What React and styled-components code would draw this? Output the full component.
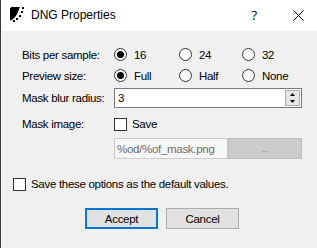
import React from 'react';
import styled, { createGlobalStyle } from 'styled-components';

const GlobalStyle = createGlobalStyle`
    html, body {
        margin: 0;
        padding: 0;
        background: #f0f0f0;
    }
    body {
        font-family: "Liberation Sans", Arial, sans-serif;
        font-size: 11.5px;
        letter-spacing: -0.3px;
        color: #000;
    }
`;

const AppIcon = () => (
    <svg width="16" height="15" viewBox="0 0 16 15">
        <path d="M0 1 L10 0 Q8 6 3 11 L0 14 Z" fill="#000" />
        <path d="M1 0 H9 Q9 7 2 13 L0 13 Z" fill="#000" />
        <rect x="12" y="0" width="2" height="2" fill="#000" />
        <rect x="11" y="4" width="2" height="2" fill="#000" />
        <rect x="9" y="8" width="2" height="2" fill="#000" />
        <rect x="6" y="11" width="2" height="2" fill="#000" />
        <rect x="3" y="13" width="2" height="2" fill="#000" />
    </svg>
);

const CloseIcon = () => (
    <svg width="11" height="11" viewBox="0 0 11 11">
        <path d="M0.5 0.5 L10.5 10.5 M10.5 0.5 L0.5 10.5" stroke="#000" strokeWidth="1" />
    </svg>
);

const SpinArrows = () => (
    <svg width="7" height="14" viewBox="0 0 7 14">
        <path d="M3.5 2 L6 5 L1 5 Z" fill="#000" />
        <path d="M1 9 L6 9 L3.5 12 Z" fill="#000" />
    </svg>
);

const Radio = ({ checked, label }) => (
    <Option>
        <RadioCircle $checked={checked} />
        <span>{label}</span>
    </Option>
);

const Check = ({ label }) => (
    <Option $gap={5}>
        <CheckBox />
        <span>{label}</span>
    </Option>
);

const App = () => {
    return (
        <Window>
            <GlobalStyle />
            <TitleBar>
                <AppIcon />
                <Title>DNG Properties</Title>
                <Help>?</Help>
                <CloseIcon />
            </TitleBar>
            <Body>
                <Form>
                    <Label>Bits per sample:</Label>
                    <Radio checked label="16" />
                    <Radio label="24" />
                    <Radio label="32" />

                    <Label>Preview size:</Label>
                    <Radio checked label="Full" />
                    <Radio label="Half" />
                    <Radio label="None" />

                    <Label>Mask blur radius:</Label>
                    <SpinBox>
                        <SpinValue>3</SpinValue>
                        <SpinButtons>
                            <SpinArrows />
                        </SpinButtons>
                    </SpinBox>

                    <Label>Mask image:</Label>
                    <Wide>
                        <Check label="Save" />
                    </Wide>

                    <span />
                    <PathRow>
                        <PathField>%od/%of_mask.png</PathField>
                        <BrowseButton>...</BrowseButton>
                    </PathRow>
                </Form>
                <DefaultRow>
                    <Check label="Save these options as the default values." />
                </DefaultRow>
                <Buttons>
                    <Button $default>Accept</Button>
                    <Button>Cancel</Button>
                </Buttons>
            </Body>
        </Window>
    );
};

const Window = styled.div`
    width: 317px;
    height: 248px;
    box-sizing: border-box;
    border-left: 1px solid #3c3c3c;
    background: #f0f0f0;
    overflow: hidden;
`;

const TitleBar = styled.div`
    height: 31px;
    background: #fff;
    display: flex;
    align-items: center;
    padding: 0 13px 0 9px;
    box-sizing: border-box;
    letter-spacing: 0;
    svg:first-child {
        margin-top: -3px;
    }
`;

const Title = styled.div`
    font-family: "Liberation Sans", Arial, sans-serif;
    font-size: 12px;
    margin-left: 5px;
    flex: 1;
    margin-top: -2px;
`;

const Help = styled.div`
    font-family: "Open Sans", "Noto Sans", sans-serif;
    font-size: 13px;
    margin-right: 36px;
    margin-top: -2px;
`;

const Body = styled.div`
    padding: 13px 0 0 21px;
`;

const Form = styled.div`
    display: grid;
    grid-template-columns: 92px 65px 63px 60px;
    grid-template-rows: 21px 21px 24px 28px 21px;
    align-items: center;
`;

const Label = styled.div`
    white-space: nowrap;
`;

const Option = styled.label`
    display: flex;
    align-items: center;
    gap: ${p => p.$gap ?? 7}px;
    white-space: nowrap;
`;

const RadioCircle = styled.span`
    width: 13px;
    height: 13px;
    box-sizing: border-box;
    border-radius: 50%;
    border: 1px solid #333;
    background: #fff;
    display: flex;
    align-items: center;
    justify-content: center;
    &::after {
        content: "";
        display: ${p => (p.$checked ? 'block' : 'none')};
        width: 7px;
        height: 7px;
        border-radius: 50%;
        background: #000;
    }
`;

const CheckBox = styled.span`
    width: 13px;
    height: 13px;
    box-sizing: border-box;
    border: 1px solid #333;
    background: #fff;
`;

const SpinBox = styled.div`
    grid-column: 2 / 5;
    width: 188px;
    height: 20px;
    box-sizing: border-box;
    border: 1px solid #7a7a7a;
    background: #fff;
    display: flex;
    align-items: stretch;
`;

const SpinValue = styled.div`
    flex: 1;
    padding-left: 3px;
    display: flex;
    align-items: center;
`;

const SpinButtons = styled.div`
    width: 15px;
    margin: 1px;
    border: 1px solid #adadad;
    background: #e6e6e6;
    display: flex;
    align-items: center;
    justify-content: center;
    box-sizing: border-box;
`;

const Wide = styled.div`
    grid-column: 2 / 5;
`;

const PathRow = styled.div`
    grid-column: 2 / 5;
    display: flex;
    height: 21px;
`;

const PathField = styled.div`
    width: 114px;
    box-sizing: border-box;
    border: 1px solid #cccccc;
    background: #f7f7f7;
    color: #6d6d6d;
    padding-left: 2px;
    display: flex;
    align-items: center;
`;

const BrowseButton = styled.div`
    width: 74px;
    box-sizing: border-box;
    border: 1px solid #bfbfbf;
    background: #cccccc;
    color: #8a8a8a;
    font-size: 9px;
    display: flex;
    align-items: flex-end;
    justify-content: center;
    padding-bottom: 4px;
`;

const DefaultRow = styled.div`
    margin: 15px 0 0 -9px;
    height: 20px;
    display: flex;
    align-items: center;
`;

const Buttons = styled.div`
    display: flex;
    gap: 8px;
    margin-top: 14px;
    padding-left: 63px;
`;

const Button = styled.div`
    width: 73px;
    height: 21px;
    box-sizing: border-box;
    background: #e1e1e1;
    border: ${p => (p.$default ? '2px solid #0078d7' : '1px solid #adadad')};
    display: flex;
    align-items: center;
    justify-content: center;
`;

export default App;
